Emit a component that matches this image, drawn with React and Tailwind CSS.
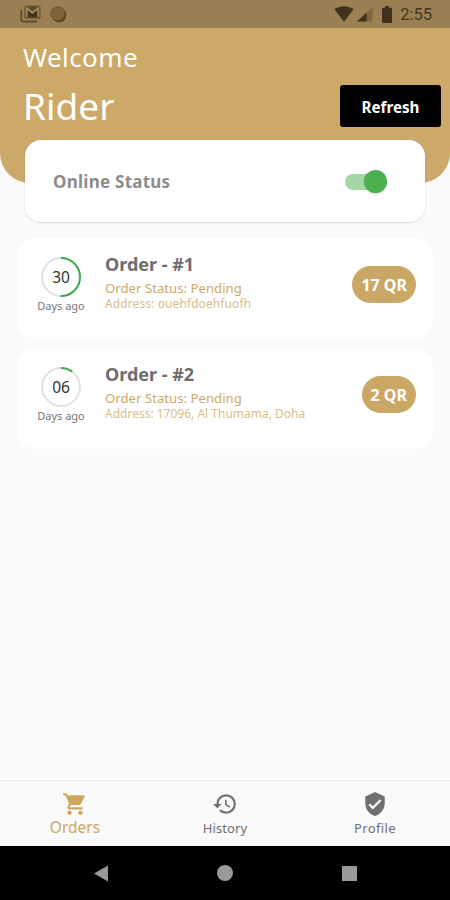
import React, { useState } from 'react';
import { MdShoppingCart, MdHistory, MdVerifiedUser } from 'react-icons/md';

const orders = [
    { id: 1, days: '30', progress: 0.5, status: 'Pending', address: 'ouehfdoehfuofh', addressClass: 'tracking-[0.1px]', price: '17 QR' },
    { id: 2, days: '06', progress: 0.1, status: 'Pending', address: '17096, Al Thumama, Doha', addressClass: 'tracking-[0px]', price: '2 QR' },
];

const StatusBar = () => (
    <div className="flex h-7 items-center justify-between bg-[#9a8052] pl-5 pr-[18px]">
        <div className="flex items-center gap-[9px]">
            {/* gmail stack */}
            <svg width="21" height="18" viewBox="0 0 21 18">
                <path d="M1.2 5v9.5a2 2 0 0 0 2 2H17" fill="none" stroke="#5f4d2e" strokeWidth="1.8" />
                <rect x="4.5" y="0.8" width="16" height="12.7" rx="1.6" fill="#5f4d2e" />
                <path d="M6.6 12V3l5.9 4.6L18.4 3v9" fill="none" stroke="#a58b5b" strokeWidth="1.7" />
                <path d="M8 12V6l4.5 3.5L17 6v6z" fill="#42331d" />
            </svg>
            <svg width="17" height="17" viewBox="0 0 17 17">
                <circle cx="9" cy="9" r="7.3" fill="#504022" />
                <circle cx="7.8" cy="7.8" r="7" fill="#806538" stroke="#6b5530" strokeWidth="1" />
            </svg>
        </div>
        <div className="flex items-center">
            <svg width="20" height="16" viewBox="0 0 20 16">
                <path d="M0.3 3.1C5.8-.8 14.2-.8 19.7 3.1L10 15.8z" fill="#40311c" />
            </svg>
            <svg className="ml-[3px]" width="16" height="15" viewBox="0 0 16 15">
                <path d="M15.5 0v14.5H0z" fill="#806841" />
                <path d="M9.7 5.5v9H0z" fill="#46351e" />
            </svg>
            <svg className="ml-[9px]" width="10" height="17" viewBox="0 0 10 17">
                <path d="M3 0h4v1.8h2a1 1 0 0 1 1 1V16a1 1 0 0 1-1 1H1a1 1 0 0 1-1-1V2.8a1 1 0 0 1 1-1h2z" fill="#40311c" />
            </svg>
            <span className="ml-2 mt-[3px] font-['Roboto',sans-serif] text-[16.5px] leading-none text-[#46371f]">2:55</span>
        </div>
    </div>
);

const Switch = ({ enabled, onChange }) => (
    <button
        type="button"
        role="switch"
        aria-label="Online Status"
        aria-checked={enabled}
        onClick={onChange}
        className={`${enabled ? 'justify-end bg-[#a4d7a6]' : 'justify-start bg-gray-300'} mt-px flex h-4 w-[42px] items-center rounded-full`}
    >
        <span className={`${enabled ? 'bg-[#4caf50]' : 'bg-white'} size-[23px] shrink-0 rounded-full shadow`} />
    </button>
);

const DaysRing = ({ days, progress }) => {
    const length = 2 * Math.PI * 19;
    return (
        <div className="flex w-[60px] flex-col items-center">
            <div className="grid size-10 place-items-center">
                <svg className="col-start-1 row-start-1 -rotate-90" width="40" height="40" viewBox="0 0 40 40" fill="none">
                    <circle cx="20" cy="20" r="19" stroke="#e0e0e0" strokeWidth="1.9" />
                    <circle cx="20" cy="20" r="19" stroke="#3fad46" strokeWidth="2" strokeDasharray={`${length * progress} ${length}`} />
                </svg>
                <span className="col-start-1 row-start-1 mt-px text-[15.5px] leading-none text-[#333]">{days}</span>
            </div>
            <span className="mt-[3px] text-[11px] leading-[12px] text-[#777]">Days ago</span>
        </div>
    );
};

const OrderCard = ({ order }) => (
    <div className="flex h-[101px] rounded-[20px] bg-white pl-[14px] pr-[17px] pt-[19px]">
        <DaysRing days={order.days} progress={order.progress} />
        <div className="-mt-[2px] ml-[14px] flex-1">
            <h2 className="text-[18px] font-bold leading-[18px] text-[#6d6d6d]">Order - #{order.id}</h2>
            <p className="mt-[7px] text-[13.2px] leading-4 text-[#cda968]">Order Status: {order.status}</p>
            <p className={`text-[12px] leading-4 text-[#d9bd8b] ${order.addressClass}`}>Address: {order.address}</p>
        </div>
        <div className="mt-[9px] flex h-[37px] items-center rounded-full bg-[#cba766] px-[9px] text-[16px] font-bold text-white">
            {order.price}
        </div>
    </div>
);

function App() {
    const [online, setOnline] = useState(true);

    return (
        <div className="flex h-[900px] w-[450px] flex-col overflow-hidden bg-[#fafafa] font-['Noto_Sans',sans-serif]">
            <StatusBar />
            <header className="h-[155px] shrink-0 rounded-b-[30px] bg-[#cca869] pl-[23px] pr-[9px] pt-[13px] text-white">
                <h1 className="text-[26px] leading-8 tracking-[0.4px]">Welcome</h1>
                <div className="mt-3 flex items-center justify-between">
                    <span className="text-[37px] leading-[42px]">Rider</span>
                    <button type="button" className="h-[42px] w-[101px] rounded-[3px] bg-black pt-[2px] text-[15.2px] font-bold">
                        Refresh
                    </button>
                </div>
            </header>

            <div className="mx-[25px] -mt-[43px] flex h-[82px] shrink-0 items-center justify-between rounded-2xl bg-white pl-[28px] pr-[38px] shadow-[0_1px_2px_rgba(0,0,0,0.12)]">
                <span className="mt-[2px] text-[17px] font-bold tracking-[0.25px] text-[#8c8c8c]">Online Status</span>
                <Switch enabled={online} onChange={() => setOnline(!online)} />
            </div>

            <main className="mt-4 flex flex-1 flex-col gap-[9px] px-[17px]">
                {orders.map((order) => (
                    <OrderCard key={order.id} order={order} />
                ))}
            </main>

            <nav className="grid h-[66px] shrink-0 grid-cols-3 border-t border-[#eeeeee] text-[#707070]">
                <div className="flex flex-col items-center pt-[10px] text-[#cda75f]">
                    <MdShoppingCart size={26} />
                    <span className="text-[15.5px] leading-[20px]">Orders</span>
                </div>
                <div className="flex flex-col items-center pt-[10px]">
                    <MdHistory size={26} />
                    <span className="mt-[2px] text-[13px] leading-[18px] tracking-[0.1px]">History</span>
                </div>
                <div className="flex flex-col items-center pt-[10px]">
                    <MdVerifiedUser size={26} />
                    <span className="mt-[2px] text-[13px] leading-[18px] tracking-[0.4px]">Profile</span>
                </div>
            </nav>

            {/* android system buttons */}
            <div className="flex h-[54px] shrink-0 items-center justify-between bg-black pl-[94px] pr-[93px]">
                <svg width="14" height="17" viewBox="0 0 14 17">
                    <path d="M14 0.5v16L0 8.5z" fill="#999" />
                </svg>
                <span className="size-4 rounded-full bg-[#999]" />
                <span className="size-[15px] bg-[#999]" />
            </div>
        </div>
    );
}

export default App;
